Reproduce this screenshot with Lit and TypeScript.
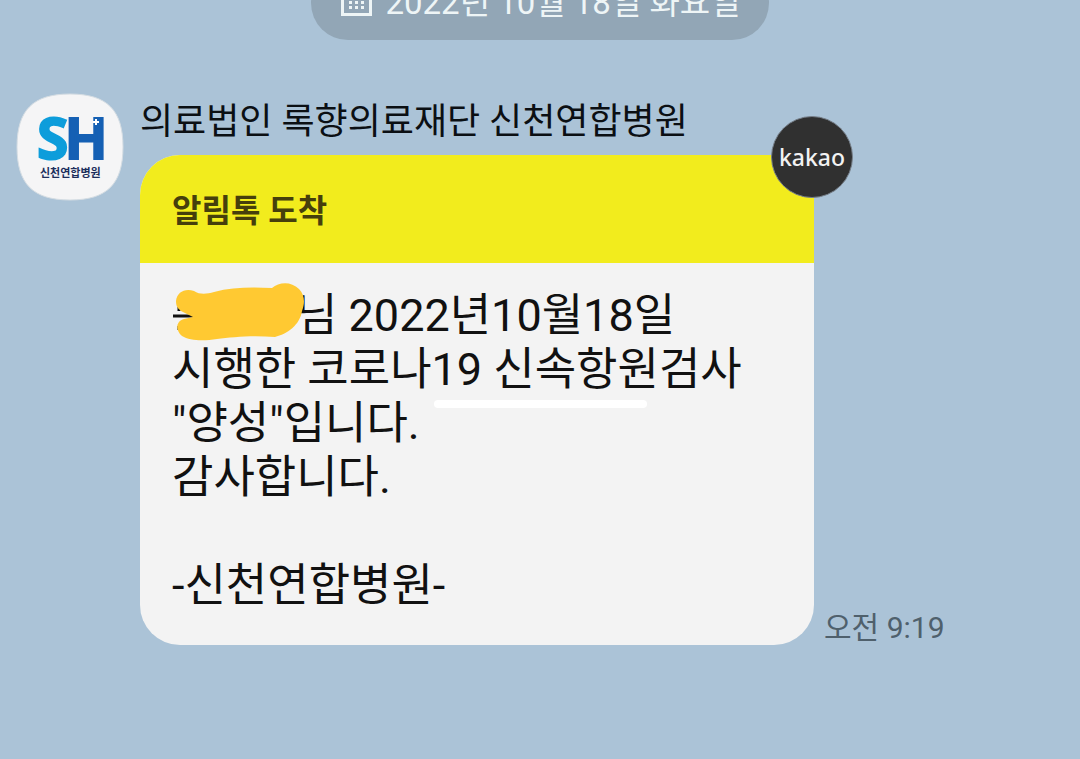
import { LitElement, html, css } from "lit";
import { customElement, property } from "lit/decorators.js";

@customElement("date-pill")
class DatePill extends LitElement {
  @property() label = "";

  static styles = css`
    :host {
      display: block;
    }
    .pill {
      display: flex;
      align-items: center;
      gap: 12px;
      height: 74px;
      padding: 0 28px;
      border-radius: 37px;
      background: #92a6b6;
      color: #eef5f6;
      font-size: 33px;
      line-height: 40px;
      white-space: nowrap;
    }
    .icon {
      flex: none;
      width: 34px;
      height: 34px;
    }
  `;

  render() {
    return html`
      <div class="pill">
        <svg class="icon" viewBox="0 0 34 34" aria-hidden="true">
          <g fill="none" stroke="#eef5f6" stroke-width="3">
            <path d="M3.500 3.500h28v25h-28z" />
            <path d="M11 0v7M24 0v7" />
          </g>
          <g fill="#eef5f6">
            <path d="M10 10h3v3h-3zM16 10h3v3h-3zM22 10h3v3h-3z" />
            <path d="M10 15h3v3h-3zM16 15h3v3h-3zM22 15h3v3h-3z" />
            <path d="M10 20h3v3h-3zM16 20h3v3h-3zM22 20h3v3h-3z" />
          </g>
        </svg>
        <time>${this.label}</time>
      </div>
    `;
  }
}

@customElement("hospital-avatar")
class HospitalAvatar extends LitElement {
  static styles = css`
    :host {
      display: block;
    }
    .logo {
      display: block;
      width: 108px;
      height: 108px;
    }
    .mark {
      font-weight: 700;
      font-size: 57px;
    }
    .s {
      font-family: "Open Sans", sans-serif;
    }
    .h {
      font-family: Roboto, sans-serif;
    }
    .name {
      font-family: "Noto Sans CJK KR", sans-serif;
      font-weight: 700;
      font-size: 11px;
    }
  `;

  render() {
    return html`
      <svg class="logo" viewBox="0 0 108 108" role="img" aria-label="신천연합병원">
        <path
          d="M54 1C91 1 107 17 107 54S91 107 54 107S1 91 1 54S17 1 54 1Z"
          fill="#f5f5f6"
          stroke="#d5dde3"
        />
        <g class="mark">
          <text class="s" x="21" y="66" fill="#0d9ddb" stroke="#0d9ddb" stroke-width="2">S</text>
          <text class="h" x="50" y="66" fill="#1560b4" stroke="#1560b4" stroke-width="2">H</text>
        </g>
        <path d="M80 26v6M77 29h6" stroke="#fff" stroke-width="2" />
        <text class="name" x="24" y="84" fill="#1d2f5c">신천연합병원</text>
      </svg>
    `;
  }
}

@customElement("notice-card")
class NoticeCard extends LitElement {
  static styles = css`
    :host {
      display: block;
      position: relative;
    }
    .card {
      overflow: hidden;
      border-radius: 40px;
      background: #f3f3f3;
    }
    .head {
      margin: 0;
      padding: 36px 32px 32px;
      background: #f2ec1d;
      color: #463f0c;
      font-size: 32px;
      font-weight: 700;
      line-height: 40px;
    }
    .body {
      padding: 26px 32px 32px;
      color: #111;
      font-size: 45px;
      line-height: 54px;
    }
    .body p {
      margin: 0;
    }
    .sign {
      padding-top: 54px;
    }
    .hidden-name {
      display: inline-block;
      width: 124px;
      height: 54px;
      vertical-align: top;
    }
    .scribble {
      display: block;
      width: 140px;
      height: 60px;
      position: relative;
      top: -6px;
    }
    .marked {
      position: relative;
    }
    .marked::after {
      content: "";
      position: absolute;
      left: 2px;
      right: 12px;
      bottom: -12px;
      height: 8px;
      border-radius: 4px;
      background: #fff;
    }
    .badge {
      position: absolute;
      top: -39px;
      right: -39px;
      display: grid;
      place-items: center;
      box-sizing: border-box;
      width: 82px;
      height: 82px;
      border: 1px solid #77808a;
      border-radius: 50%;
      background: #303030;
      color: #f2f2f2;
      font-family: "Noto Sans", sans-serif;
      font-size: 23px;
      font-weight: 500;
      line-height: 32px;
    }
  `;

  render() {
    return html`
      <article class="card">
        <h2 class="head">알림톡 도착</h2>
        <div class="body">
          <p>
            <span class="hidden-name"
              ><svg class="scribble" viewBox="0 0 140 60" aria-hidden="true">
                <path d="M1 33h21M7 24v4M7 43v4" stroke="#111" stroke-width="3" />
                <path
                  d="M4 18C5 9 13 5 22 8C28 12 35 11 42 9C60 4 80 4 100 5C107 -1 119 -2 127 6C133 12 133 20 130 28C128 42 115 51 103 54C80 52 60 54 45 56C32 58 18 58 10 53C3 47 4 38 12 36L21 34L9 28C5 25 4 22 4 18Z"
                  fill="#ffc932"
                /></svg></span
            >님 2022년10월18일
          </p>
          <p>시행한 코로나<span class="marked">19 신속항원</span>검사</p>
          <p>"양성"입니다.</p>
          <p>감사합니다.</p>
          <p class="sign">-신천연합병원-</p>
        </div>
      </article>
      <span class="badge">kakao</span>
    `;
  }
}

@customElement("app-root")
class AppRoot extends LitElement {
  static styles = css`
    :host {
      display: block;
      min-height: 100vh;
      overflow: hidden;
      background: #abc3d7;
      font-family: Roboto, "Noto Sans CJK KR", sans-serif;
    }
    .date {
      display: flex;
      justify-content: center;
      margin-top: -34px;
    }
    .message {
      display: flex;
      align-items: flex-start;
      gap: 16px;
      padding: 53px 16px 0;
    }
    .avatar {
      flex: none;
    }
    .content {
      flex: 1;
      min-width: 0;
    }
    .sender {
      margin: 0;
      padding: 7px 0 10px;
      color: #0b0f13;
      font-size: 36px;
      font-weight: 400;
      line-height: 45px;
    }
    .row {
      display: flex;
      align-items: flex-end;
      gap: 10px;
    }
    .bubble {
      flex: 0 1 674px;
    }
    .time {
      flex: none;
      color: #4f606c;
      font-size: 30px;
      line-height: 34px;
    }
  `;

  render() {
    return html`
      <div class="date">
        <date-pill label="2022년 10월 18일 화요일"></date-pill>
      </div>
      <section class="message">
        <hospital-avatar class="avatar"></hospital-avatar>
        <div class="content">
          <h1 class="sender">의료법인 록향의료재단 신천연합병원</h1>
          <div class="row">
            <notice-card class="bubble"></notice-card>
            <time class="time">오전 9:19</time>
          </div>
        </div>
      </section>
    `;
  }
}
